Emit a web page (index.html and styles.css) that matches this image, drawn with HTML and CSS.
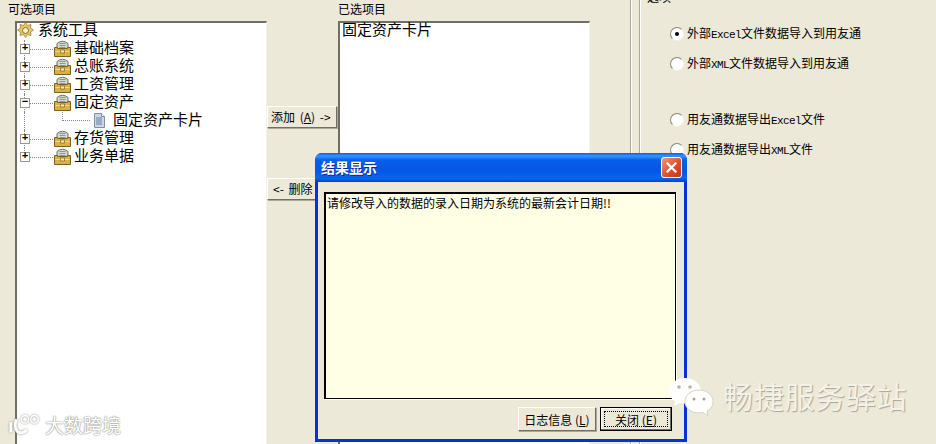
FILE: index.html
```html
<!DOCTYPE html>
<html lang="zh-CN">
<head>
  <meta charset="UTF-8">
  <title>结果显示</title>
  <link rel="stylesheet" href="styles.css">
</head>
<body>
  <svg class="defs" width="0" height="0">
    <symbol id="gear" viewBox="0 0 17 17">
      <path d="M8.5 0.500l2 3 3.500-1-0.500 3.500 3 2-3 2 0.500 3.500-3.500-1-2 3-2-3-3.500 1 0.500-3.500-3-2 3-2-0.500-3.500 3.500 1z" fill="#e8c860" stroke="#a08038" stroke-width="0.800"/>
      <circle cx="8.500" cy="8.500" r="3" fill="#f6efc8" stroke="#8a7038"/>
    </symbol>
    <symbol id="module" viewBox="0 0 17 17">
      <path d="M3 3.500Q8.500 -1 14 3.500V10H3z" fill="#d4dad0" stroke="#687068"/>
      <path d="M5.500 3.500h6M5.500 5.500h6M5.500 7.500h6" stroke="#8a9a90"/>
      <path d="M0.500 7.500h3v1h10v-1h3v9h-16z" fill="#d8b048" stroke="#806018"/>
      <path d="M1.500 11.500h14" stroke="#f0d888"/>
      <path d="M6.500 10h4v3h-4z" fill="#f4e8b0" stroke="#806018" stroke-width="0.700"/>
    </symbol>
    <symbol id="doc" viewBox="0 0 13 15">
      <path d="M1.500 0.500h7l3 3v11h-10z" fill="#c8d8e8" stroke="#8090a0"/>
      <path d="M8.500 0.500v3h3" fill="#fff" stroke="#8090a0"/>
      <path d="M3 5h6M3 7h6M3 9h6M3 11h6" stroke="#6880a0"/>
    </symbol>
  </svg>

  <div class="page">
    <section class="pick-col">
      <div class="cap">可选项目</div>
      <div class="sunken tree">
        <div class="row root">
          <svg class="ico-gear"><use href="#gear"/></svg>
          <span class="root-label">系统工具</span>
        </div>
        <div class="row node"><span class="exp">+</span><span class="dots"></span><svg class="ico-mod"><use href="#module"/></svg><span>基础档案</span></div>
        <div class="row node"><span class="exp">+</span><span class="dots"></span><svg class="ico-mod"><use href="#module"/></svg><span>总账系统</span></div>
        <div class="row node"><span class="exp">+</span><span class="dots"></span><svg class="ico-mod"><use href="#module"/></svg><span>工资管理</span></div>
        <div class="row node"><span class="exp">−</span><span class="dots"></span><svg class="ico-mod"><use href="#module"/></svg><span>固定资产</span></div>
        <div class="row leaf"><span class="elbow"></span><svg class="ico-doc"><use href="#doc"/></svg><span>固定资产卡片</span></div>
        <div class="row node"><span class="exp">+</span><span class="dots"></span><svg class="ico-mod"><use href="#module"/></svg><span>存货管理</span></div>
        <div class="row node last"><span class="exp">+</span><span class="dots"></span><svg class="ico-mod"><use href="#module"/></svg><span>业务单据</span></div>
      </div>
    </section>

    <section class="move-col">
      <button class="btn move-btn">添加 (<u>A</u>) -&gt;</button>
      <button class="btn move-btn del-btn">&lt;- 删除 (<u>D</u>)</button>
    </section>

    <section class="chosen-col">
      <div class="cap">已选项目</div>
      <div class="sunken chosen">固定资产卡片</div>
    </section>

    <div class="rule"></div>
    <div class="rule second"></div>

    <section class="opts">
      <div class="opts-cap">选项</div>
      <label class="opt on"><span class="radio"></span><span>外部<span class="lat">Excel</span>文件数据导入到用友通</span></label>
      <label class="opt"><span class="radio"></span><span>外部<span class="lat">XML</span>文件数据导入到用友通</span></label>
      <label class="opt spaced"><span class="radio"></span><span>用友通数据导出<span class="lat">Excel</span>文件</span></label>
      <label class="opt"><span class="radio"></span><span>用友通数据导出<span class="lat">XML</span>文件</span></label>
    </section>
  </div>

  <div class="dialog">
    <div class="titlebar">
      <span class="title-text">结果显示</span>
      <span class="close">
        <svg viewBox="0 0 20 20"><path d="M5 5l10 10M15 5L5 15" stroke="#fff" stroke-width="2.500"/></svg>
      </span>
    </div>
    <div class="dialog-body">
      <div class="msg">请修改导入的数据的录入日期为系统的最新会计日期!!</div>
      <div class="dialog-btns">
        <button class="btn log-btn">日志信息 (<u>L</u>)</button>
        <button class="btn close-btn"><span class="focus">关闭 (<u>E</u>)</span></button>
      </div>
    </div>
  </div>

  <div class="mark-left">
    <svg class="mark-logo" viewBox="0 0 36 24">
      <path d="M3 9v11M9 6q-3 8 1 13 6 3 10-2" fill="none" stroke="#fff" stroke-width="3"/>
      <circle cx="18" cy="6" r="4" fill="none" stroke="#fff" stroke-width="1.500"/>
      <circle cx="28" cy="6" r="4" fill="none" stroke="#fff" stroke-width="1.500"/>
    </svg>
    <span>大数跨境</span>
  </div>

  <div class="mark-right">
    <svg class="mark-chat" viewBox="0 0 46 40">
      <path d="M17 1C8 1 1 7 1 14c0 4 2 8 6 10l-1 5 6-3c2 .5 3 .6 5 .6 9 0 16-6 16-12.600S26 1 17 1z" fill="#fff"/>
      <path d="M31 13c-8 0-14 5-14 11.500S23 36 31 36c1.500 0 3-.2 4-.6l5 3.600-1-5c4-2 6-5 6-9.500C45 18 39 13 31 13z" fill="#fff" stroke="#d8d4c4"/>
      <circle cx="11" cy="10" r="1.800" fill="#b8b4a4"/><circle cx="22" cy="10" r="1.800" fill="#b8b4a4"/>
      <circle cx="26" cy="22" r="1.500" fill="#a8a494"/><circle cx="36" cy="22" r="1.500" fill="#a8a494"/>
    </svg>
    <span class="mark-text">畅捷服务驿站</span>
  </div>
</body>
</html>
```

FILE: styles.css
```css
html, body {
  margin: 0;
  padding: 0;
  width: 936px;
  height: 444px;
  overflow: hidden;
  background: #ece9d8;
  font-family: "Noto Sans CJK SC", "Liberation Sans", sans-serif;
  font-size: 12px;
  color: #000;
}

body {
  position: relative;
}

.defs {
  position: absolute;
}

.page {
  display: flex;
  height: 444px;
  padding-left: 8px;
  box-sizing: border-box;
}

.cap {
  height: 21px;
  padding-top: 1px;
  box-sizing: border-box;
  line-height: 16px;
}

.sunken {
  background: #fff;
  border-top: 2px solid #716f64;
  border-left: 2px solid #716f64;
  border-right: 1px solid #f4f2e8;
  box-sizing: border-box;
}

/* left tree */
.pick-col {
  width: 259px;
  display: flex;
  flex-direction: column;
}

.tree {
  flex: 1;
  margin-left: 7px;
  font-size: 15px;
}

.row {
  position: relative;
  display: flex;
  align-items: center;
  height: 18px;
  line-height: 18px;
}

.root {
  margin-top: -3px;
}

.ico-gear {
  width: 17px;
  height: 17px;
  margin-top: 2px;
  margin-right: 4px;
}

.node {
  padding-left: 3px;
}

/* vertical dotted trunk of the tree */
.node::before,
.leaf::before {
  content: "";
  position: absolute;
  left: 7px;
  top: 2px;
  bottom: -2px;
  border-left: 1px dotted #8a8a80;
}

.node.last::before {
  bottom: 7px;
}

.exp {
  position: relative;
  z-index: 1;
  width: 10px;
  height: 10px;
  margin-top: 4px;
  box-sizing: border-box;
  border: 1px solid #9a9a90;
  background: #fff;
  font-size: 11px;
  line-height: 7px;
  text-align: center;
  font-family: "Liberation Mono", monospace;
  font-weight: bold;
}

.dots {
  width: 23px;
  margin-top: 4px;
  margin-right: 1px;
  border-top: 1px dotted #8a8a80;
}

.ico-mod {
  width: 17px;
  height: 17px;
  margin-top: 3px;
  margin-right: 3px;
}

.elbow {
  width: 28px;
  height: 9px;
  margin: 0 3px 5px 45px;
  border-left: 1px dotted #8a8a80;
  border-bottom: 1px dotted #8a8a80;
  box-sizing: border-box;
}

.ico-doc {
  width: 13px;
  height: 15px;
  margin-top: 2px;
  margin-right: 7px;
}

/* add / remove buttons */
.move-col {
  width: 71px;
  display: flex;
  flex-direction: column;
  gap: 50px;
  padding-top: 106px;
  box-sizing: border-box;
}

.btn {
  background: #ece9d8;
  border: 1px solid;
  border-color: #fff #716f64 #716f64 #fff;
  box-shadow: 1px 1px 0 #aca899;
  font-family: inherit;
  font-size: 12px;
  color: #000;
  padding: 0;
  white-space: nowrap;
}

.move-btn {
  width: 70px;
  height: 22px;
  line-height: 18px;
  text-align: left;
  padding-left: 3px;
  word-spacing: 2px;
  overflow: hidden;
}

.del-btn {
  padding-left: 5px;
}

/* chosen list */
.chosen-col {
  width: 252px;
  display: flex;
  flex-direction: column;
}

.chosen {
  flex: 1;
  font-size: 15px;
  line-height: 12px;
  padding-left: 2px;
}

.rule {
  width: 1px;
  margin-left: 40px;
  background: #aca899;
  box-shadow: 1px 0 0 #fff;
}

.rule.second {
  margin-left: 8px;
}

/* right hand options */
.opts {
  padding-left: 30px;
  margin-top: -11px;
}

.opts-cap {
  margin-left: -23px;
  height: 24px;
  line-height: 16px;
}

.opt {
  display: flex;
  align-items: center;
  gap: 3px;
  height: 18px;
  margin-top: 12px;
  margin-bottom: 12px;
  white-space: nowrap;
  line-height: 18px;
}

.opt.spaced {
  margin-top: 38px;
}

.lat {
  font-family: "Liberation Mono", monospace;
  font-size: 11px;
  letter-spacing: -0.6px;
}

.radio {
  width: 12px;
  height: 12px;
  border-radius: 50%;
  background: #fff;
  border: 1px solid;
  border-color: #8a8878 #f4f2e8 #f4f2e8 #8a8878;
  display: flex;
  align-items: center;
  justify-content: center;
}

.opt.on .radio::after {
  content: "";
  width: 4px;
  height: 4px;
  border-radius: 50%;
  background: #000;
}

/* watermarks */
.mark-left {
  position: absolute;
  left: 8px;
  top: 412px;
  display: flex;
  align-items: center;
  gap: 3px;
  font-size: 19px;
  line-height: 26px;
  color: #fff;
  text-shadow: 0 0 2px #8a8a80, 0 0 1px #8a8a80;
}

.mark-logo {
  width: 34px;
  height: 24px;
  filter: drop-shadow(0 0 1px #8a8a80);
}

.mark-right {
  position: absolute;
  left: 668px;
  top: 377px;
  display: flex;
  align-items: flex-start;
  gap: 9px;
  color: #f4f2e8;
}

.mark-text {
  font-size: 30px;
  line-height: 36px;
  letter-spacing: 0.700px;
  text-shadow: 1px 1px 1px #a8a698;
}

.mark-chat {
  width: 46px;
  height: 40px;
}

/* result dialog */
.dialog {
  position: absolute;
  left: 315px;
  top: 153px;
  width: 372px;
  height: 289px;
  display: flex;
  flex-direction: column;
  box-sizing: border-box;
  background: #0831d9;
  border-radius: 7px 7px 0 0;
  padding: 0 3px 3px;
}

.titlebar {
  height: 29px;
  margin: 0 -3px;
  padding: 0 5px 0 6px;
  display: flex;
  align-items: center;
  justify-content: space-between;
  border-radius: 7px 7px 0 0;
  background: linear-gradient(#0a5fe0 0, #3a93ff 3px, #0860e8 7px, #0456e4 18px, #0a66f0 25px, #0340c8 29px);
  color: #fff;
  font-size: 14px;
  font-weight: bold;
  text-shadow: 1px 1px 0 #0a2a90;
  box-sizing: border-box;
}

.title-text {
  margin-bottom: 2px;
}

.close {
  width: 21px;
  height: 21px;
  display: block;
  box-sizing: border-box;
  border: 1px solid #fff;
  border-radius: 3px;
  background: linear-gradient(135deg, #ec9a80, #d8532c 55%, #b8381a);
}

.close svg {
  display: block;
  width: 19px;
  height: 19px;
}

.dialog-body {
  flex: 1;
  background: #ece9d8;
  padding: 10px 8px 0 6px;
  display: flex;
  flex-direction: column;
}

.msg {
  height: 207px;
  box-sizing: border-box;
  background: #ffffe6;
  border: 1px solid #000;
  border-top-width: 2px;
  border-left-width: 2px;
  box-shadow: 1px 1px 0 #fff;
  padding: 0 1px;
  line-height: 17px;
}

.dialog-btns {
  display: flex;
  justify-content: flex-end;
  gap: 4px;
  margin-top: 8px;
  margin-right: 4px;
}

.log-btn {
  width: 78px;
  height: 24px;
}

.close-btn {
  width: 72px;
  height: 24px;
  border: 1px solid #000;
  box-shadow: inset -1px -1px 0 #716f64, inset 1px 1px 0 #fff;
  padding: 3px;
}

.focus {
  display: block;
  height: 100%;
  line-height: 15px;
  border: 1px dotted #000;
  box-sizing: border-box;
}
```
